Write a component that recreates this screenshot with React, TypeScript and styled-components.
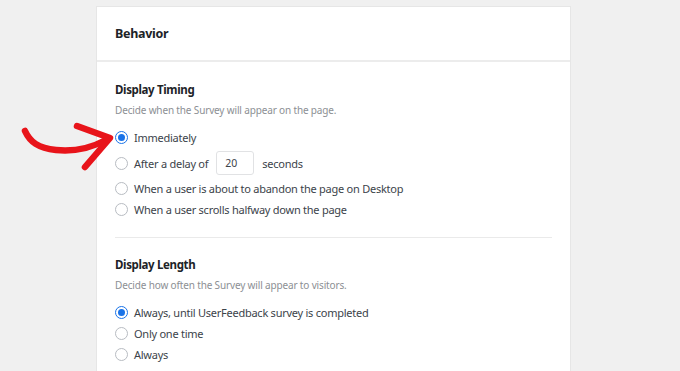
import styled, { createGlobalStyle } from "styled-components";

const GlobalStyle = createGlobalStyle`
    html, body {
        margin: 0;
        padding: 0;
        background: #f0f0f0;
        font-family: "Noto Sans", "Open Sans", Arial, sans-serif;
    }
`;

const Page = styled.div`
    position: relative;
    width: 680px;
    height: 371px;
    overflow: hidden;
    padding-top: 6px;
    box-sizing: border-box;
`;

const Card = styled.div`
    margin-left: 96px;
    width: 475px;
    background: #fff;
    border: 1px solid #e6e6e6;
    border-bottom: none;
    box-sizing: border-box;
    height: 365px;
`;

const CardHeader = styled.div`
    height: 53px;
    display: flex;
    align-items: center;
    padding: 0 18px;
    border-bottom: 2px solid #ececec;
`;

const CardTitle = styled.h2`
    margin: 0;
    font-size: 12.5px;
    font-weight: 700;
    letter-spacing: -0.3px;
    color: #1d2327;
`;

const CardBody = styled.div`
    padding: 19px 18px 0;
`;

const Section = styled.section`
    padding-bottom: 17px;

    & + & {
        border-top: 1px solid #eaeaea;
        padding-top: 18px;
    }
`;

const SectionTitle = styled.h3`
    margin: 0;
    font-size: 11.5px;
    line-height: 18px;
    font-weight: 700;
    letter-spacing: -0.35px;
    color: #1d2327;
`;

const Description = styled.p`
    margin: 3px 0 9px;
    font-size: 10px;
    line-height: 16px;
    letter-spacing: -0.15px;
    color: #8c8f94;
`;

const Option = styled.label<{ $tall?: boolean }>`
    display: flex;
    align-items: center;
    gap: 6px;
    height: ${(p) => (p.$tall ? "30px" : "21px")};
    font-size: 11px;
    letter-spacing: -0.25px;
    color: #3c434a;
    white-space: nowrap;
`;

const Radio = styled.span<{ $checked?: boolean }>`
    width: 13px;
    height: 13px;
    flex: none;
    border-radius: 50%;
    box-sizing: border-box;
    border: 1px solid ${(p) => (p.$checked ? "#1a73e8" : "#b8bcc2")};
    display: flex;
    align-items: center;
    justify-content: center;
    background: #fff;

    &::after {
        content: "";
        width: 7px;
        height: 7px;
        border-radius: 50%;
        background: ${(p) => (p.$checked ? "#1a73e8" : "transparent")};
    }
`;

const DelayInput = styled.span`
    display: inline-flex;
    align-items: center;
    width: 38px;
    height: 24px;
    box-sizing: border-box;
    padding-left: 8px;
    margin: 0 2px;
    border: 1px solid #e1e2e4;
    border-radius: 3px;
    font-size: 10.5px;
    letter-spacing: 0;
    color: #3c434a;
`;

const Arrow = styled.svg`
    position: absolute;
    left: 0;
    top: 110px;
`;

const timing = [
    { label: "Immediately", checked: true },
    { label: "delay" },
    { label: "When a user is about to abandon the page on Desktop" },
    { label: "When a user scrolls halfway down the page" },
];

const length = [
    { label: "Always, until UserFeedback survey is completed", checked: true },
    { label: "Only one time" },
    { label: "Always" },
];

export default function App() {
    return (
        <Page>
            <GlobalStyle />
            <Card>
                <CardHeader>
                    <CardTitle>Behavior</CardTitle>
                </CardHeader>
                <CardBody>
                    <Section>
                        <SectionTitle>Display Timing</SectionTitle>
                        <Description>Decide when the Survey will appear on the page.</Description>
                        {timing.map((o) =>
                            o.label === "delay" ? (
                                <Option key={o.label} $tall>
                                    <Radio />
                                    After a delay of
                                    <DelayInput>20</DelayInput>
                                    seconds
                                </Option>
                            ) : (
                                <Option key={o.label}>
                                    <Radio $checked={o.checked} />
                                    {o.label}
                                </Option>
                            )
                        )}
                    </Section>
                    <Section>
                        <SectionTitle>Display Length</SectionTitle>
                        <Description>Decide how often the Survey will appear to visitors.</Description>
                        {length.map((o) => (
                            <Option key={o.label}>
                                <Radio $checked={o.checked} />
                                {o.label}
                            </Option>
                        ))}
                    </Section>
                </CardBody>
            </Card>
            <Arrow width="120" height="70" viewBox="0 110 120 70">
                <path
                    d="M25 131 C 30 142, 38 148, 56 150 C 76 152, 93 147, 106 140"
                    fill="none"
                    stroke="#e8141a"
                    strokeWidth="6.5"
                    strokeLinecap="round"
                />
                <path
                    d="M77 126 L 110 138 L 85 167"
                    fill="none"
                    stroke="#e8141a"
                    strokeWidth="6.5"
                    strokeLinecap="round"
                    strokeLinejoin="round"
                />
            </Arrow>
        </Page>
    );
}
